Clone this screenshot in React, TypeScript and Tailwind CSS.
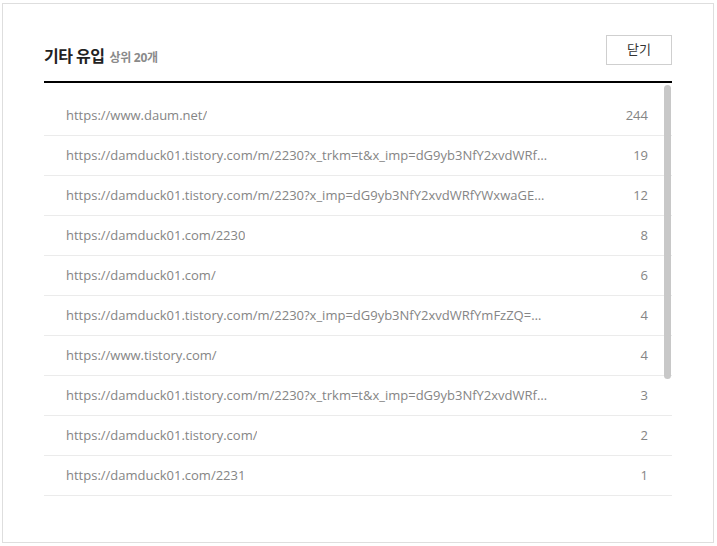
import React from 'react';

const rows: { url: string; count: number }[] = [
  { url: 'https://www.daum.net/', count: 244 },
  { url: 'https://damduck01.tistory.com/m/2230?x_trkm=t&x_imp=dG9yb3NfY2xvdWRfaW1wcmVzc2lvbg', count: 19 },
  { url: 'https://damduck01.tistory.com/m/2230?x_imp=dG9yb3NfY2xvdWRfYWxwaGEwbW9iaWxl', count: 12 },
  { url: 'https://damduck01.com/2230', count: 8 },
  { url: 'https://damduck01.com/', count: 6 },
  { url: 'https://damduck01.tistory.com/m/2230?x_imp=dG9yb3NfY2xvdWRfYmFzZQ=%3D&x_trkm=t', count: 4 },
  { url: 'https://www.tistory.com/', count: 4 },
  { url: 'https://damduck01.tistory.com/m/2230?x_trkm=t&x_imp=dG9yb3NfY2xvdWRfbW9iaWxl', count: 3 },
  { url: 'https://damduck01.tistory.com/', count: 2 },
  { url: 'https://damduck01.com/2231', count: 1 },
];

const font = { fontFamily: '"Open Sans", "Noto Sans CJK KR", sans-serif' };

export default function App() {
  return (
    <div className="min-h-[546px] w-[717px] bg-white pt-[3px] pl-[2px]" style={font}>
      <div className="w-[712px] h-[540px] border border-[#dedede] bg-white px-[41px] pt-[31px]">
        <div className="flex items-start justify-between h-[46px]">
          <h2 className="mt-[9px] flex items-baseline gap-[5px]">
            <span className="text-[16px] font-bold text-[#222] tracking-[-0.5px]">기타 유입</span>
            <span className="text-[12px] font-bold text-[#8a8a8a] tracking-[-0.3px]">상위 20개</span>
          </h2>
          <button className="w-[66px] h-[30px] border border-[#cfcfcf] bg-white text-[13px] text-[#333]">
            닫기
          </button>
        </div>
        <div className="h-[2px] bg-black" />
        <div className="relative h-[415px] overflow-hidden pt-[13px]">
          {rows.map((r, i) => (
            <div
              key={i}
              className="flex h-10 items-center justify-between border-b border-[#ebebeb] pl-[22px] pr-[24px] text-[13px] text-[#858585]"
            >
              <span className="max-w-[484px] truncate">{r.url}</span>
              <span>{r.count}</span>
            </div>
          ))}
          <div className="absolute right-[1px] top-[2px] h-[294px] w-[7px] rounded-full bg-[#c8c8c8]" />
        </div>
      </div>
    </div>
  );
}
